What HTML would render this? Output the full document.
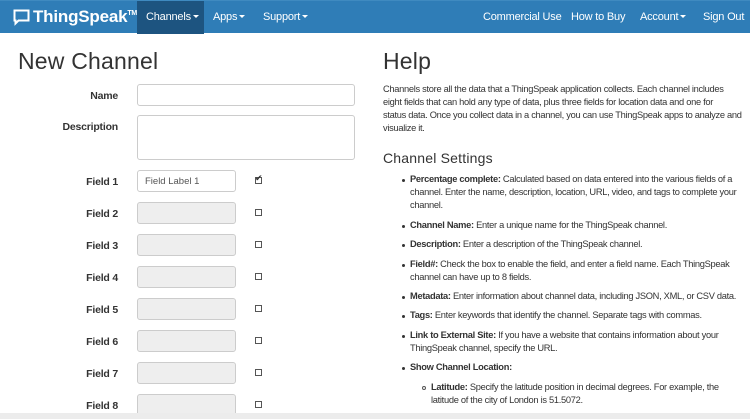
<!DOCTYPE html>
<html><head><meta charset="utf-8"><style>
*{margin:0;padding:0;box-sizing:border-box}
body{width:750px;height:419px;overflow:hidden;background:#fff;font-family:"Liberation Sans",sans-serif;color:#333;position:relative}
.nav{position:absolute;left:0;top:0;width:750px;height:33px;background:#2f7db7;border-top:1px solid #3f8ac0}
.nav span{position:absolute;top:10px;color:#fff;font-size:11px;letter-spacing:-0.2px}
.act{position:absolute;left:137px;top:0;width:67px;height:33px;background:#1d5480}
.logo{position:absolute;left:33px;top:6px;color:#fff;font-weight:bold;font-size:17px;letter-spacing:-0.2px}
.nav i{display:inline-block;width:0;height:0;border-left:3px solid transparent;border-right:3px solid transparent;border-top:3px solid #fff;vertical-align:2px;margin-left:2px}
.a{position:absolute;white-space:nowrap}
.h1{font-size:23px;font-weight:300;color:#333;letter-spacing:0.2px}
.lbl{font-size:10.5px;font-weight:bold;text-align:right;width:60px;left:58px;letter-spacing:-0.2px}
.inp{position:absolute;border:1px solid #ccc;border-radius:3px;background:#fff}
.dis{background:#eee}
.cb{position:absolute;width:7px;height:7px;border:1px solid #555;left:255px;background:#fff}
.t{font-size:9.3px;color:#333;letter-spacing:-0.3px}
.b{font-weight:bold}
.dot{position:absolute;width:3px;height:3px;border-radius:50%;background:#333}
.cir{position:absolute;width:4px;height:4px;border-radius:50%;border:1px solid #555}
</style></head><body>
<div class="nav">
<div class="act"></div>
<svg style="position:absolute;left:13px;top:8px" width="17" height="18" viewBox="0 0 17 18"><path d="M1.5 1.5h14v10h-10l-3 3v-3h-1z" fill="none" stroke="#fff" stroke-width="2"/></svg>
<div class="logo">ThingSpeak<sup style="font-size:7px;vertical-align:7px">TM</sup></div>
<span style="left:146px">Channels<i></i></span>
<span style="left:213px">Apps<i></i></span>
<span style="left:263px">Support<i></i></span>
<span style="left:483px">Commercial Use</span>
<span style="left:571px">How to Buy</span>
<span style="left:640px">Account<i></i></span>
<span style="left:703px">Sign Out</span>
</div>

<div class="a h1" style="left:18px;top:48px">New Channel</div>
<div class="a lbl" style="top:90px">Name</div>
<div class="inp" style="left:137px;top:84px;width:218px;height:22px"></div>
<div class="a lbl" style="top:121px;width:80px;left:38px">Description</div>
<div class="inp" style="left:137px;top:115px;width:218px;height:45px"></div>
<div class="a lbl" style="top:176px">Field 1</div>
<div class="inp" style="left:137px;top:170px;width:99px;height:22px"></div>
<div class="a" style="left:145px;top:176px;font-size:9.5px;color:#555">Field Label 1</div>
<div class="cb" style="top:177px"></div><div class="a" style="left:255px;top:173px;font-size:9px">✔</div>

<div class="a lbl" style="top:208px">Field 2</div><div class="inp dis" style="left:137px;top:202px;width:99px;height:22px"></div><div class="cb" style="top:209px"></div>
<div class="a lbl" style="top:240px">Field 3</div><div class="inp dis" style="left:137px;top:234px;width:99px;height:22px"></div><div class="cb" style="top:241px"></div>
<div class="a lbl" style="top:272px">Field 4</div><div class="inp dis" style="left:137px;top:266px;width:99px;height:22px"></div><div class="cb" style="top:273px"></div>
<div class="a lbl" style="top:304px">Field 5</div><div class="inp dis" style="left:137px;top:298px;width:99px;height:22px"></div><div class="cb" style="top:305px"></div>
<div class="a lbl" style="top:336px">Field 6</div><div class="inp dis" style="left:137px;top:330px;width:99px;height:22px"></div><div class="cb" style="top:337px"></div>
<div class="a lbl" style="top:368px">Field 7</div><div class="inp dis" style="left:137px;top:362px;width:99px;height:22px"></div><div class="cb" style="top:369px"></div>
<div class="a lbl" style="top:400px">Field 8</div><div class="inp dis" style="left:137px;top:394px;width:99px;height:22px"></div><div class="cb" style="top:401px"></div>

<div class="a h1" style="left:383px;top:48px">Help</div>
<div class="a t" style="left:383px;top:84px">Channels store all the data that a ThingSpeak application collects. Each channel includes</div>
<div class="a t" style="left:383px;top:97px">eight fields that can hold any type of data, plus three fields for location data and one for</div>
<div class="a t" style="left:383px;top:110px">status data. Once you collect data in a channel, you can use ThingSpeak apps to analyze and</div>
<div class="a t" style="left:383px;top:123px">visualize it.</div>
<div class="a" style="left:383px;top:150px;font-size:14px;font-weight:300;letter-spacing:0.2px">Channel Settings</div>

<div class="dot" style="left:402px;top:179px"></div>
<div class="a t" style="left:410px;top:174px"><span class="b">Percentage complete:</span> Calculated based on data entered into the various fields of a</div>
<div class="a t" style="left:410px;top:187px">channel. Enter the name, description, location, URL, video, and tags to complete your</div>
<div class="a t" style="left:410px;top:200px">channel.</div>
<div class="dot" style="left:402px;top:225px"></div>
<div class="a t" style="left:410px;top:220px"><span class="b">Channel Name:</span> Enter a unique name for the ThingSpeak channel.</div>
<div class="dot" style="left:402px;top:244px"></div>
<div class="a t" style="left:410px;top:239px"><span class="b">Description:</span> Enter a description of the ThingSpeak channel.</div>
<div class="dot" style="left:402px;top:264px"></div>
<div class="a t" style="left:410px;top:259px"><span class="b">Field#:</span> Check the box to enable the field, and enter a field name. Each ThingSpeak</div>
<div class="a t" style="left:410px;top:272px">channel can have up to 8 fields.</div>
<div class="dot" style="left:402px;top:296px"></div>
<div class="a t" style="left:410px;top:291px"><span class="b">Metadata:</span> Enter information about channel data, including JSON, XML, or CSV data.</div>
<div class="dot" style="left:402px;top:315px"></div>
<div class="a t" style="left:410px;top:310px"><span class="b">Tags:</span> Enter keywords that identify the channel. Separate tags with commas.</div>
<div class="dot" style="left:402px;top:335px"></div>
<div class="a t" style="left:410px;top:330px"><span class="b">Link to External Site:</span> If you have a website that contains information about your</div>
<div class="a t" style="left:410px;top:343px">ThingSpeak channel, specify the URL.</div>
<div class="dot" style="left:402px;top:367px"></div>
<div class="a t b" style="left:410px;top:362px">Show Channel Location:</div>
<div class="cir" style="left:422px;top:386px"></div>
<div class="a t" style="left:431px;top:382px"><span class="b">Latitude:</span> Specify the latitude position in decimal degrees. For example, the</div>
<div class="a t" style="left:431px;top:395px">latitude of the city of London is 51.5072.</div>

<div style="position:absolute;left:0;top:413px;width:750px;height:6px;background:#ececec"></div>
</body></html>
